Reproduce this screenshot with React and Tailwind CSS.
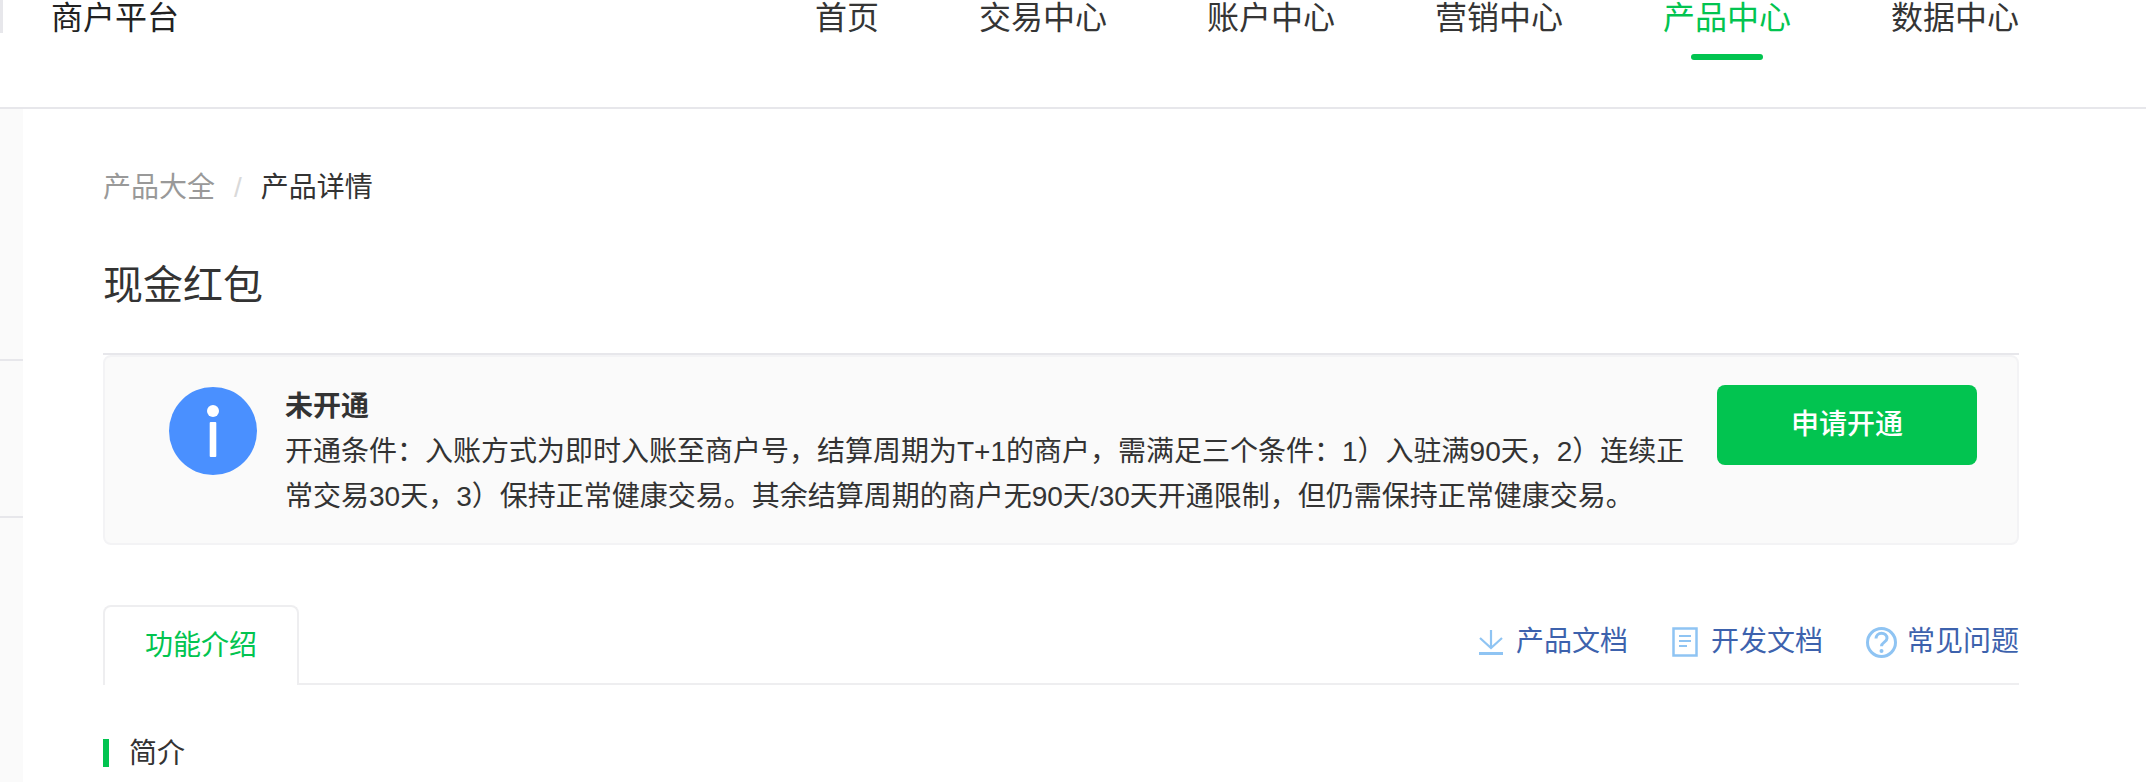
export default function App() {
  const font = "font-['Liberation_Sans','Noto_Sans_CJK_SC',sans-serif]";
  const nav = ["首页", "交易中心", "账户中心", "营销中心", "产品中心", "数据中心"];
  return (
    <div className={`${font} h-[782px] w-full overflow-hidden bg-white text-[#333] flex flex-col`}>
      <header className="h-[109px] shrink-0 border-b-2 border-[#e7e7eb] flex items-start">
        <div className="w-[3px] h-[33px] bg-[#e7e7eb]" />
        <div className="ml-[48px] text-[32px] leading-[36px] text-[#222]">商户平台</div>
        <nav className="ml-auto mr-[127px] flex gap-[100px]">
          {nav.map((n) => (
            <div key={n} className="flex flex-col items-center">
              <span className={n === "产品中心" ? "text-[32px] leading-[36px] text-[#02c450]" : "text-[32px] leading-[36px] text-[#353535]"}>{n}</span>
              {n === "产品中心" && <span className="mt-[18px] w-[72px] h-[6px] rounded-[3px] bg-[#02c450]" />}
            </div>
          ))}
        </nav>
      </header>
      <div className="flex flex-1 min-h-0">
        <aside className="w-[23px] shrink-0 bg-[#fafafa]">
          <div className="h-[252px] border-b-2 border-[#e7e7eb]" />
          <div className="h-[157px] border-b-2 border-[#e7e7eb]" />
        </aside>
        <main className="flex-1 pl-[80px] pr-[127px] pt-[59px]">
          <div className="flex items-center text-[28px] leading-[40px]">
            <span className="text-[#999]">产品大全</span>
            <span className="mx-[19px] text-[#d9d9d9]">/</span>
            <span className="text-[#333]">产品详情</span>
          </div>
          <h1 className="mt-[49px] text-[40px] leading-[56px] font-normal text-[#333]">现金红包</h1>
          <div className="mt-[40px] h-[2px] bg-[#e7e7eb]" />
          <section className="h-[190px] border-2 border-[#f3f3f5] rounded-[8px] bg-[#fafafa] flex items-start">
            <svg className="mt-[30px] ml-[64px] shrink-0" width="88" height="88" viewBox="0 0 88 88">
              <circle cx="44" cy="44" r="44" fill="#4a90ff" />
              <circle cx="44" cy="24" r="6" fill="#fff" />
              <rect x="40.7" y="35" width="6.6" height="35" rx="1" fill="#fff" />
            </svg>
            <div className="mt-[27px] ml-[28px] w-[1400px] text-[28px] leading-[45px] text-[#333]">
              <div className="font-bold">未开通</div>
              <div>开通条件：入账方式为即时入账至商户号，结算周期为T+1的商户，需满足三个条件：1）入驻满90天，2）连续正常交易30天，3）保持正常健康交易。其余结算周期的商户无90天/30天开通限制，但仍需保持正常健康交易。</div>
            </div>
            <button className="mt-[28px] ml-auto mr-[40px] w-[260px] h-[80px] shrink-0 rounded-[8px] bg-[#02c450] text-white text-[28px] font-medium">申请开通</button>
          </section>
          <div className="mt-[60px] h-[80px] border-b-2 border-[#eeeef0] flex items-start justify-between">
            <div className="w-[196px] h-[80px] border-2 border-b-0 border-[#eeeef0] rounded-t-[8px] bg-white flex items-center justify-center text-[28px] text-[#02c450]">功能介绍</div>
            <div className="flex items-center h-[74px] text-[28px] text-[#3d62ad]">
              <svg width="26" height="26" viewBox="0 0 26 26" fill="none" stroke="#8fc4f3" strokeWidth="2.2">
                <path d="M13 1v17M2 9l11 10 11-10" />
                <path d="M1 24.5h24" strokeWidth="3" />
              </svg>
              <span className="ml-[12px]">产品文档</span>
              <svg className="ml-[44px]" width="26" height="30" viewBox="0 0 26 30" fill="none" stroke="#8fc4f3" strokeWidth="2.5">
                <rect x="1.5" y="1.5" width="23" height="27" />
                <path d="M7 9h12M7 14h12M7 19h8" strokeWidth="2" />
              </svg>
              <span className="ml-[13px]">开发文档</span>
              <svg className="ml-[43px]" width="31" height="31" viewBox="0 0 31 31" fill="none" stroke="#8fc4f3" strokeWidth="3">
                <circle cx="15.5" cy="15.5" r="14" />
                <path d="M10 11.5c0-3 2.4-5.3 5.5-5.3s5.5 2.2 5.5 5c0 3.8-5.5 4-5.5 8" />
                <circle cx="15.5" cy="24" r="2" fill="#8fc4f3" stroke="none" />
              </svg>
              <span className="ml-[10px]">常见问题</span>
            </div>
          </div>
          <div className="mt-[54px] border-l-[6px] border-[#02c450] pl-[20px] h-[28px] flex items-center text-[28px] text-[#333]"><span className="relative top-[1px]">简介</span></div>
        </main>
      </div>
    </div>
  );
}
